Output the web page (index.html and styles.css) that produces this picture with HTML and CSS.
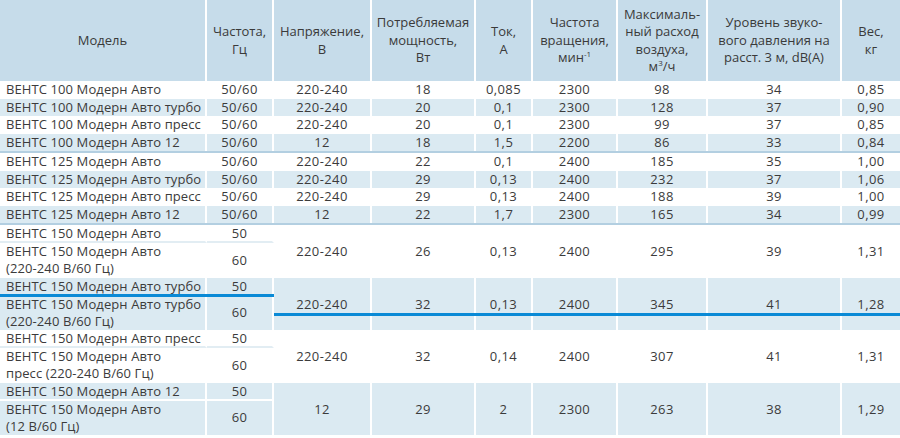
FILE: index.html
```html
<!DOCTYPE html>
<html lang="ru">
<head>
<meta charset="utf-8">
<title>ВЕНТС Модерн Авто</title>
<link rel="stylesheet" href="styles.css">
</head>
<body>
<div class="wrap">
<table class="spec">
  <colgroup>
    <col class="c-model"><col class="c-freq"><col class="c-volt"><col class="c-pow"><col class="c-cur"><col class="c-rpm"><col class="c-air"><col class="c-snd"><col class="c-wt">
  </colgroup>
  <thead>
    <tr>
      <th>Модель</th>
      <th>Частота,<br>Гц</th>
      <th>Напряжение,<br>В</th>
      <th>Потребляемая<br>мощность,<br>Вт</th>
      <th>Ток,<br>А</th>
      <th>Частота<br>вращения,<br>мин<sup>-1</sup></th>
      <th>Максималь-<br>ный расход<br>воздуха,<br>м<sup>3</sup>/ч</th>
      <th>Уровень звуко-<br>вого давления на<br>расст. 3 м, dB(A)</th>
      <th class="last">Вес,<br>кг</th>
    </tr>
  </thead>
  <tbody>
    <tr class="r"><td class="m">ВЕНТС 100 Модерн Авто</td><td>50/60</td><td>220-240</td><td>18</td><td>0,085</td><td>2300</td><td>98</td><td>34</td><td class="last">0,85</td></tr>
    <tr class="r alt"><td class="m">ВЕНТС 100 Модерн Авто турбо</td><td>50/60</td><td>220-240</td><td>20</td><td>0,1</td><td>2300</td><td>128</td><td>37</td><td class="last">0,90</td></tr>
    <tr class="r"><td class="m">ВЕНТС 100 Модерн Авто пресс</td><td>50/60</td><td>220-240</td><td>20</td><td>0,1</td><td>2300</td><td>99</td><td>37</td><td class="last">0,85</td></tr>
    <tr class="r alt"><td class="m">ВЕНТС 100 Модерн Авто 12</td><td>50/60</td><td>12</td><td>18</td><td>1,5</td><td>2200</td><td>86</td><td>33</td><td class="last">0,84</td></tr>
    <tr class="sep"><td colspan="9"></td></tr>
    <tr class="r"><td class="m">ВЕНТС 125 Модерн Авто</td><td>50/60</td><td>220-240</td><td>22</td><td>0,1</td><td>2400</td><td>185</td><td>35</td><td class="last">1,00</td></tr>
    <tr class="r alt"><td class="m">ВЕНТС 125 Модерн Авто турбо</td><td>50/60</td><td>220-240</td><td>29</td><td>0,13</td><td>2400</td><td>232</td><td>37</td><td class="last">1,06</td></tr>
    <tr class="r"><td class="m">ВЕНТС 125 Модерн Авто пресс</td><td>50/60</td><td>220-240</td><td>29</td><td>0,13</td><td>2400</td><td>188</td><td>39</td><td class="last">1,00</td></tr>
    <tr class="r alt"><td class="m">ВЕНТС 125 Модерн Авто 12</td><td>50/60</td><td>12</td><td>22</td><td>1,7</td><td>2300</td><td>165</td><td>34</td><td class="last">0,99</td></tr>
    <tr class="sep"><td colspan="9"></td></tr>

    <tr class="s1"><td class="m">ВЕНТС 150 Модерн Авто</td><td>50</td><td rowspan="2">220-240</td><td rowspan="2">26</td><td rowspan="2">0,13</td><td rowspan="2">2400</td><td rowspan="2">295</td><td rowspan="2">39</td><td rowspan="2" class="last">1,31</td></tr>
    <tr class="s2"><td class="m">ВЕНТС 150 Модерн Авто<br>(220-240 В/60 Гц)</td><td>60</td></tr>

    <tr class="s1 alt"><td class="m">ВЕНТС 150 Модерн Авто турбо</td><td>50</td><td rowspan="2">220-240</td><td rowspan="2">32</td><td rowspan="2">0,13</td><td rowspan="2">2400</td><td rowspan="2">345</td><td rowspan="2">41</td><td rowspan="2" class="last">1,28</td></tr>
    <tr class="s2 alt"><td class="m">ВЕНТС 150 Модерн Авто турбо<br>(220-240 В/60 Гц)</td><td>60</td></tr>

    <tr class="s1"><td class="m">ВЕНТС 150 Модерн Авто пресс</td><td>50</td><td rowspan="2">220-240</td><td rowspan="2">32</td><td rowspan="2">0,14</td><td rowspan="2">2400</td><td rowspan="2">307</td><td rowspan="2">41</td><td rowspan="2" class="last">1,31</td></tr>
    <tr class="s2"><td class="m">ВЕНТС 150 Модерн Авто<br>пресс (220-240 В/60 Гц)</td><td>60</td></tr>

    <tr class="s1 alt"><td class="m">ВЕНТС 150 Модерн Авто 12</td><td>50</td><td rowspan="2">12</td><td rowspan="2">29</td><td rowspan="2">2</td><td rowspan="2">2300</td><td rowspan="2">263</td><td rowspan="2">38</td><td rowspan="2" class="last">1,29</td></tr>
    <tr class="s2 alt"><td class="m">ВЕНТС 150 Модерн Авто<br>(12 В/60 Гц)</td><td>60</td></tr>
  </tbody>
</table>
<div class="mark mark-left"></div>
<div class="mark mark-right"></div>
</div>
</body>
</html>
```
FILE: styles.css
```css
html, body {
  margin: 0;
  padding: 0;
  background: #ffffff;
}
body {
  font-family: "Open Sans", "Noto Sans", "DejaVu Sans", sans-serif;
  font-size: 13px;
  color: #3b3b3b;
}
.wrap {
  position: relative;
  width: 900px;
  height: 438px;
  overflow: hidden;
}
.spec {
  width: 900px;
  table-layout: fixed;
  border-collapse: separate;
  border-spacing: 0;
}
.c-model { width: 207px; }
.c-freq { width: 67px; }
.c-volt { width: 98px; }
.c-pow { width: 104px; }
.c-cur { width: 57px; }
.c-rpm { width: 85px; }
.c-air { width: 90px; }
.c-snd { width: 134px; }
.c-wt { width: 58px; }

.spec th {
  background: #c6dcea;
  font-weight: normal;
  height: 81px;
  padding: 0 2px;
  line-height: 17.5px;
  text-align: center;
  vertical-align: middle;
  border-right: 2px solid #ffffff;
  color: #3a3a3a;
}
.spec th.last, .spec td.last { border-right: 0; }
.spec sup {
  font-size: 8px;
  line-height: 0;
  vertical-align: 5px;
}
.spec td {
  padding: 0 2px;
  text-align: center;
  vertical-align: middle;
  border-right: 2px solid #ffffff;
  white-space: nowrap;
  letter-spacing: 0.4px;
}
.spec td.m {
  text-align: left;
  padding-left: 6px;
  letter-spacing: 0.1px;
}
.spec tr.r td {
  height: 17.5px;
  line-height: 17.5px;
}
.spec tr.alt td { background: #dbeaf2; }
.spec tr.sep td {
  height: 2px;
  padding: 0;
  line-height: 0;
  font-size: 0;
  background: #b3cfe1;
  border-right: 0;
}
.spec tr.s1 td {
  line-height: 16px;
  height: 16px;
}
.spec tr.s1 td.m, .spec tr.s1 td.m + td {
  border-bottom: 2px solid #e2edf3;
}
.spec tr.s1.alt td.m, .spec tr.s1.alt td.m + td {
  border-bottom-color: #ffffff;
}
.spec tr.s2 td {
  line-height: 17.25px;
  height: 34.5px;
}
.mark {
  position: absolute;
  height: 3px;
  background: #0a8ad6;
}
.mark-left {
  left: 0;
  top: 294px;
  width: 274px;
}
.mark-right {
  left: 274px;
  top: 313px;
  width: 626px;
}
```
